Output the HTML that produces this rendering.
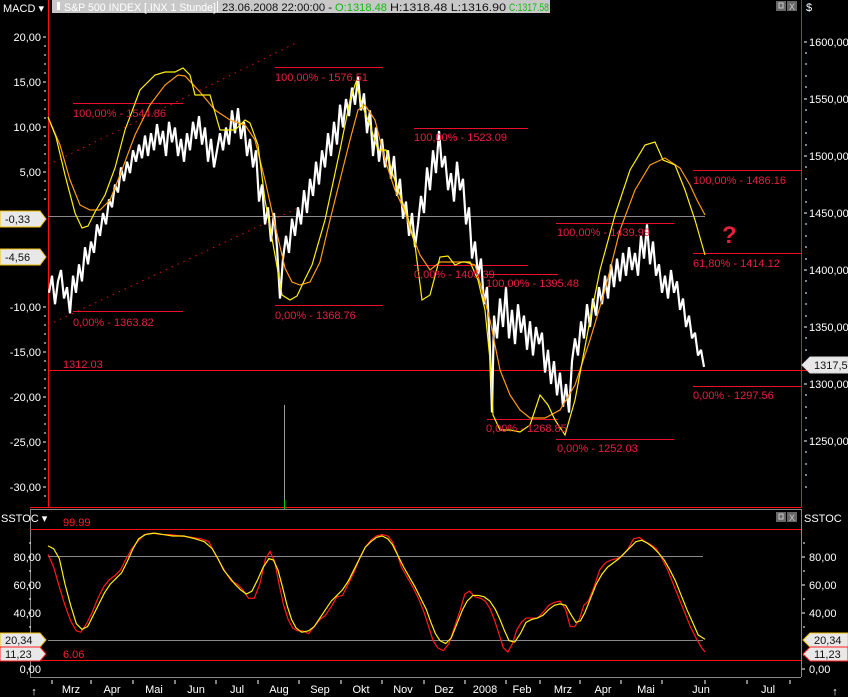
<!DOCTYPE html>
<html><head><meta charset="utf-8"><style>
html,body{margin:0;padding:0;background:#000;width:848px;height:697px;overflow:hidden}
svg{display:block}
text{font-family:"Liberation Sans",sans-serif}
</style></head><body>
<svg width="848" height="697" viewBox="0 0 848 697" xmlns="http://www.w3.org/2000/svg">
<rect width="848" height="697" fill="#000"/>
<line x1="48.5" y1="0" x2="48.5" y2="507" stroke="#ff1010" stroke-width="1"/>
<line x1="801.5" y1="0" x2="801.5" y2="507" stroke="#ff1010" stroke-width="1"/>
<line x1="30" y1="507.5" x2="801" y2="507.5" stroke="#ff1010"/>
<line x1="30" y1="509.5" x2="801" y2="509.5" stroke="#888"/>
<line x1="30" y1="677.5" x2="801" y2="677.5" stroke="#888"/>
<line x1="30.5" y1="509" x2="30.5" y2="677" stroke="#888"/>
<line x1="801.5" y1="509" x2="801.5" y2="677" stroke="#888"/>
<line x1="284.5" y1="405" x2="284.5" y2="507" stroke="#999"/>
<line x1="284.5" y1="500" x2="284.5" y2="509" stroke="#0c0"/>

<!-- header -->
<text x="3" y="12" fill="#fff" font-size="11">MACD ▾</text>
<rect x="52" y="0" width="498" height="13" fill="#c8c8c8"/>
<rect x="57" y="2" width="3" height="8" fill="#fff"/>
<text x="64" y="11" font-size="11" fill="#fff" textLength="152" lengthAdjust="spacingAndGlyphs">S&amp;P 500 INDEX [.INX  1 Stunde]</text>
<rect x="217" y="1" width="1" height="11" fill="#fff"/>
<text x="222" y="11" font-size="11" fill="#111" textLength="110" lengthAdjust="spacingAndGlyphs">23.06.2008 22:00:00 -</text>
<text x="335" y="11" font-size="11" fill="#1b1" textLength="52" lengthAdjust="spacingAndGlyphs">O:1318.48</text>
<text x="390" y="11" font-size="11" fill="#111" textLength="116" lengthAdjust="spacingAndGlyphs">H:1318.48 L:1316.90</text>
<text x="509" y="11" font-size="11" fill="#1b1" textLength="40" lengthAdjust="spacingAndGlyphs">C:1317.58</text>
<rect x="776" y="1" width="10" height="10" fill="#666"/><rect x="779" y="3" width="4" height="5" fill="none" stroke="#ccc"/>
<rect x="787" y="1" width="10" height="10" fill="#666"/><text x="789" y="10" font-size="9" fill="#ccc">X</text>
<text x="806" y="11" fill="#fff" font-size="11">$</text>

<g fill="#fff" font-size="11" text-anchor="end">
<text x="41" y="41">20,00</text><text x="41" y="86">15,00</text><text x="41" y="131">10,00</text><text x="41" y="176">5,00</text>
<text x="41" y="311">-10,00</text><text x="41" y="356">-15,00</text><text x="41" y="401">-20,00</text><text x="41" y="446">-25,00</text><text x="41" y="491">-30,00</text>
</g>
<g fill="#fff" font-size="11">
<text x="809" y="46">1600,00</text><text x="809" y="103">1550,00</text><text x="809" y="160">1500,00</text><text x="809" y="217">1450,00</text><text x="809" y="274">1400,00</text><text x="809" y="331">1350,00</text><text x="809" y="388">1300,00</text><text x="809" y="445">1250,00</text>
</g>
<g stroke="#fff">
<path d="M43 37h3M43 82h3M43 127h3M43 172h3M43 307h3M43 352h3M43 397h3M43 442h3M43 487h3M804 42h3M804 99h3M804 156h3M804 213h3M804 270h3M804 327h3M804 384h3M804 441h3"/>
<path d="M44 46h2M44 55h2M44 64h2M44 73h2M44 91h2M44 100h2M44 109h2M44 118h2M44 136h2M44 145h2M44 154h2M44 163h2M44 181h2M44 190h2M44 199h2M44 316h2M44 325h2M44 334h2M44 343h2M44 361h2M44 370h2M44 379h2M44 388h2M44 406h2M44 415h2M44 424h2M44 433h2M44 451h2M44 460h2M44 469h2M44 478h2M44 496h2M805 53h2M805 64h2M805 76h2M805 87h2M805 110h2M805 122h2M805 133h2M805 145h2M805 167h2M805 179h2M805 190h2M805 202h2M805 224h2M805 236h2M805 247h2M805 259h2M805 281h2M805 293h2M805 304h2M805 316h2M805 338h2M805 350h2M805 395h2M805 407h2M805 418h2M805 430h2M805 452h2M805 464h2M805 475h2M805 487h2"/>
</g>

<g stroke="#e8102c" stroke-width="1">
<path d="M73 103.5H183M73 311.5H183M275 67.5H383M275 305.5H383M414 128.5H528M414 265.5H528M486 274.5H558M487 419.5H558M556 223.5H674M556 439.5H674M693 170.5H801M693 253.5H801M693 386.5H801"/>
</g>
<line x1="48" y1="370.5" x2="848" y2="370.5" stroke="#ff1010"/>
<line x1="48" y1="216.5" x2="705" y2="216.5" stroke="#8a8a8a"/>
<path d="M48 165L298 42M48 325L300 207" stroke="#e01010" stroke-dasharray="1.5 5" fill="none"/>

<!-- price -->
<g transform="translate(0,42) scale(1,-1.14) translate(0,-1600)">
<polyline fill="none" stroke="#fff" stroke-width="2.2" vector-effect="non-scaling-stroke" stroke-linejoin="bevel" points="49,1380 52,1395 55,1370 58,1390 61,1400 64,1375 67,1385 70,1362 73,1395 76,1380 79,1405 82,1390 85,1420 88,1405 91,1425 94,1415 97,1440 100,1430 103,1450 106,1440 109,1462 112,1455 115,1475 118,1468 121,1490 124,1478 127,1495 130,1485 133,1505 136,1495 139,1510 142,1498 145,1518 148,1500 151,1520 154,1505 157,1528 160,1510 163,1522 166,1500 169,1530 172,1512 175,1525 178,1500 181,1515 184,1495 187,1520 190,1505 193,1530 196,1515 199,1535 202,1510 205,1525 208,1495 211,1515 214,1490 217,1505 220,1520 223,1505 226,1525 229,1510 232,1540 235,1520 238,1542 241,1515 244,1530 247,1500 250,1515 253,1490 256,1505 259,1460 262,1475 265,1440 268,1455 271,1425 274,1450 277,1420 280,1375 283,1410 286,1430 289,1415 292,1445 295,1430 298,1455 301,1440 304,1470 307,1450 310,1480 313,1465 316,1495 319,1475 322,1505 325,1490 328,1520 331,1500 334,1530 337,1510 340,1545 343,1525 346,1550 349,1535 352,1560 355,1545 358,1570 361,1540 364,1555 367,1520 370,1540 373,1500 376,1525 379,1495 382,1515 385,1490 388,1505 391,1480 394,1500 397,1465 400,1480 403,1445 406,1460 409,1430 412,1450 415,1420 418,1440 421,1465 424,1450 427,1490 430,1470 433,1505 436,1485 439,1522 442,1490 445,1500 448,1470 451,1485 454,1460 457,1495 460,1470 463,1480 466,1440 469,1455 472,1410 475,1425 478,1395 481,1410 484,1370 487,1385 490,1330 492,1275 494,1360 497,1340 500,1375 503,1350 506,1385 509,1340 512,1365 515,1335 518,1370 521,1345 524,1360 527,1330 530,1355 533,1325 536,1350 539,1335 542,1345 545,1310 548,1330 551,1300 554,1320 557,1290 560,1310 563,1280 566,1300 569,1275 572,1320 575,1340 578,1325 581,1355 584,1340 587,1370 590,1350 593,1375 596,1360 599,1385 602,1370 605,1395 608,1375 611,1405 614,1385 617,1410 620,1390 623,1415 626,1395 629,1420 632,1400 635,1415 638,1395 641,1430 644,1410 647,1440 650,1405 653,1425 656,1395 659,1405 662,1380 665,1395 668,1375 671,1400 674,1380 677,1390 680,1365 683,1375 686,1350 689,1360 692,1340 695,1345 698,1325 701,1330 704,1315"/>
</g>

<!-- MACD in pixel coords -->
<polyline fill="none" stroke="#ff9a10" stroke-width="1.2" points="48,117 60,145 70,180 80,205 90,210 100,210 110,200 120,175 135,135 150,105 165,85 178,75 185,76 200,92 215,110 230,120 245,125 255,140 265,180 275,225 285,268 292,282 300,285 310,282 320,262 330,220 340,180 350,140 358,110 365,105 375,120 385,160 395,190 405,212 412,235 420,255 430,270 440,262 450,262 465,262 475,265 482,290 490,320 500,370 510,395 520,410 530,418 545,418 560,410 575,385 590,340 605,290 620,230 635,190 650,165 665,158 680,168 690,185 697,200 705,215"/>
<polyline fill="none" stroke="#ffef10" stroke-width="1.2" points="48,117 56,137 65,175 75,213 82,228 88,226 95,212 105,195 115,168 125,130 140,90 155,75 165,72 175,72 183,68 190,75 195,95 210,95 220,130 235,130 245,120 250,123 258,145 265,200 275,255 282,295 290,300 297,296 305,279 312,265 325,220 340,150 350,100 356,82 362,105 370,125 378,150 386,150 393,175 400,195 408,218 415,245 422,300 430,295 440,257 448,256 455,265 462,262 470,262 478,280 485,310 490,360 493,415 500,430 510,430 520,432 530,425 540,395 548,405 555,420 565,435 575,400 590,320 600,270 615,215 630,170 645,145 655,142 663,160 675,165 685,190 695,220 705,255"/>

<g fill="#e8203c" font-size="11">
<text x="73" y="117">100,00% - 1544.86</text>
<text x="73" y="326">0,00% - 1363.82</text>
<text x="275" y="81">100,00% - 1576.51</text>
<text x="275" y="319">0,00% - 1368.76</text>
<text x="414" y="141">100,00% - 1523.09</text>
<text x="414" y="278">0,00% - 1405.39</text>
<text x="486" y="287">100,00% - 1395.48</text>
<text x="486" y="432">0,00% - 1268.85</text>
<text x="557" y="236">100,00% - 1439.99</text>
<text x="557" y="452">0,00% - 1252.03</text>
<text x="693" y="184">100,00% - 1486.16</text>
<text x="693" y="267">61,80% - 1414.12</text>
<text x="693" y="399">0,00% - 1297.56</text>
<text x="63" y="368">1312.03</text>
</g>
<text x="722" y="243" fill="#e8203c" font-size="24" font-weight="bold">?</text>

<g font-size="11">
<path d="M0 211H40L46 219L40 227H0Z" fill="#e8e8e8" stroke="#f0c000"/>
<text x="5" y="223" fill="#111">-0,33</text>
<path d="M0 249H40L46 257L40 265H0Z" fill="#e8e8e8" stroke="#f0c000"/>
<text x="5" y="261" fill="#111">-4,56</text>
<path d="M848 357H810L802 365L810 373H848Z" fill="#e8e8e8" stroke="#ddd"/>
<text x="814" y="369" fill="#111">1317,5</text>
</g>

<!-- STOC -->
<text x="1" y="522" fill="#fff" font-size="11">SSTOC ▾</text>
<text x="804" y="522" fill="#fff" font-size="11">SSTOC</text>
<rect x="776" y="512" width="10" height="10" fill="#666"/><rect x="779" y="514" width="4" height="5" fill="none" stroke="#ccc"/>
<rect x="787" y="512" width="10" height="10" fill="#666"/><text x="789" y="521" font-size="9" fill="#ccc">X</text>
<line x1="30" y1="529.5" x2="801" y2="529.5" stroke="#ff1010"/>
<line x1="30" y1="660.5" x2="801" y2="660.5" stroke="#ff1010"/>
<line x1="48" y1="556.5" x2="703" y2="556.5" stroke="#8a8a8a"/>
<line x1="48" y1="640.5" x2="703" y2="640.5" stroke="#8a8a8a"/>
<text x="63" y="526" fill="#ff2020" font-size="11">99.99</text>
<text x="63" y="658" fill="#ff2020" font-size="11">6.06</text>
<g fill="#fff" font-size="11" text-anchor="end">
<text x="41" y="561">80,00</text><text x="41" y="589">60,00</text><text x="41" y="617">40,00</text><text x="41" y="673">0,00</text>
</g>
<g fill="#fff" font-size="11">
<text x="809" y="561">80,00</text><text x="809" y="589">60,00</text><text x="809" y="617">40,00</text><text x="809" y="673">0,00</text>
</g>
<g stroke="#fff"><path d="M28 557h3M28 585h3M28 613h3M28 669h3M802 557h3M802 585h3M802 613h3M802 669h3M29 543h2M29 571h2M29 599h2M29 627h2M29 655h2M803 543h2M803 571h2M803 599h2M803 627h2M803 655h2"/></g>
<g transform="translate(48,669) scale(1.1328,-1.415) translate(-48,0)" fill="none">
<polyline stroke="#ff1a1a" stroke-width="1.2" vector-effect="non-scaling-stroke" points="48,81 53,72 58,58 63,45 68,34 73,27 77,26 82,32 87,40 92,50 97,58 102,63 107,66 112,70 117,78 122,85 127,90 133,95 140,96 148,95 156,95 165,94 175,93 183,92 190,90 195,82 200,75 205,68 210,62 215,60 220,56 225,50 230,50 235,60 240,78 244,83 248,76 252,60 256,45 260,35 264,29 268,27 273,27 278,25 283,30 288,35 293,38 298,44 303,51 308,52 313,60 318,68 323,78 328,86 333,91 338,94 343,95 348,94 352,90 356,82 360,72 365,65 370,58 375,50 380,40 384,30 388,20 392,15 397,13 402,18 407,30 412,42 416,53 420,55 425,51 430,50 434,48 438,43 442,35 446,25 450,15 454,12 458,18 462,28 466,33 470,36 475,36 480,36 485,40 490,45 495,47 500,48 505,42 509,30 513,30 517,35 521,45 525,48 530,58 535,70 540,75 545,77 550,78 555,80 560,85 565,92 570,93 575,90 580,88 585,85 590,78 595,70 600,60 605,50 610,40 615,30 620,22 625,15 628,12"/>
<polyline stroke="#ffee10" stroke-width="1.2" vector-effect="non-scaling-stroke" points="48,87 53,85 58,78 63,60 68,45 73,32 78,28 83,30 88,38 93,46 98,54 103,60 108,64 113,68 118,76 123,85 128,92 134,95 142,96 150,95 158,94 168,94 178,92 186,90 193,85 198,78 203,70 208,65 213,60 218,56 223,53 228,55 233,63 238,72 243,78 247,77 251,70 255,58 259,45 263,35 267,29 272,26 278,27 283,30 288,36 293,42 298,48 303,52 308,56 313,62 318,70 323,78 328,86 333,90 338,93 343,94 348,92 352,88 357,80 362,72 367,65 372,58 377,50 382,42 386,33 390,25 394,20 399,18 404,22 409,32 414,42 418,48 423,52 428,52 433,51 438,48 443,42 447,35 451,27 455,20 460,19 465,25 470,33 475,35 480,36 485,38 490,42 495,45 500,46 505,45 510,38 514,33 518,34 522,40 527,50 532,60 537,67 542,72 547,75 552,78 557,82 562,86 567,90 572,91 577,89 582,86 587,82 592,77 597,70 602,62 607,52 612,42 617,33 622,24 628,21"/>
</g>
<g font-size="11">
<path d="M0 633H40L46 640L40 647H0Z" fill="#e8e8e8" stroke="#f0c000"/><text x="5" y="644" fill="#111">20,34</text>
<path d="M0 647H40L46 654L40 661H0Z" fill="#e8e8e8" stroke="#ff2020"/><text x="5" y="658" fill="#111">11,23</text>
<path d="M848 633H810L803 640L810 647H848Z" fill="#e8e8e8" stroke="#f0c000"/><text x="814" y="644" fill="#111">20,34</text>
<path d="M848 647H810L803 654L810 661H848Z" fill="#e8e8e8" stroke="#ff2020"/><text x="814" y="658" fill="#111">11,23</text>
</g>

<g stroke="#fff"><path d="M52 680v4M91 680v4M133 680v4M175 680v4M216 680v4M258 680v4M299 680v4M341 680v4M382 680v4M424 680v4M465 680v4M506 680v4M540 680v4M580 680v4M621 680v4M662 680v4M705 680v4M747 680v4M790 680v4"/></g>
<g fill="#fff" font-size="11" text-anchor="middle">
<text x="71" y="693">Mrz</text><text x="112" y="693">Apr</text><text x="154" y="693">Mai</text><text x="196" y="693">Jun</text><text x="237" y="693">Jul</text><text x="279" y="693">Aug</text><text x="320" y="693">Sep</text><text x="361" y="693">Okt</text><text x="403" y="693">Nov</text><text x="444" y="693">Dez</text><text x="485" y="693">2008</text><text x="522" y="693">Feb</text><text x="563" y="693">Mrz</text><text x="603" y="693">Apr</text><text x="646" y="693">Mai</text><text x="701" y="693">Jun</text><text x="768" y="693">Jul</text>
</g>
<text x="34" y="695" fill="#fff" font-size="11" text-anchor="middle">↑</text>
<text x="835" y="695" fill="#fff" font-size="11" text-anchor="middle">↑</text>
</svg>
</body></html>
